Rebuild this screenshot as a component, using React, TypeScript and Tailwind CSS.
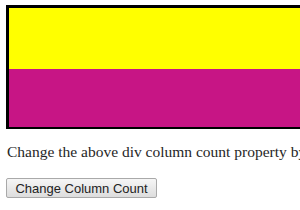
export default function App() {
  return (
    <div className="w-[300px] h-[210px] overflow-hidden bg-white pt-[5px] pl-[6px]">
      {/* column box */}
      <div className="w-[330px] border-black border-t-[3px] border-l-[3px] border-b-2">
        <div className="h-[61px] bg-[#ffff00]"></div>
        <div className="h-[58px] bg-[#c71585]"></div>
      </div>

      <p className="mt-[14px] ml-px whitespace-nowrap text-[15.5px] leading-[18px] text-[#262626] font-['Liberation_Serif',serif]">
        Change the above div column count property by clicking the button.
      </p>

      <button className="mt-[17px] h-[20px] w-[151px] rounded-[2px] border border-[#a9a9a9] bg-gradient-to-b from-[#f6f6f6] to-[#dddddd] text-[13px] leading-none text-[#222] font-['Liberation_Sans',Arial,sans-serif]">
        Change Column Count
      </button>
    </div>
  );
}
